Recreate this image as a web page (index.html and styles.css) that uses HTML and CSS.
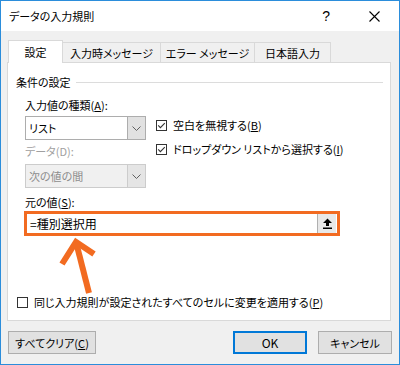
FILE: index.html
```html
<!DOCTYPE html>
<html lang="ja">
<head>
    <meta charset="UTF-8">
    <meta name="viewport" content="width=device-width, initial-scale=1.0">
    <title>データの入力規則</title>
    <link rel="stylesheet" href="styles.css">
</head>
<body>
    <div class="dialogWindow">
        <div class="titleBar">
            <span class="titleText">データの入力規則</span>
            <span class="helpBtn">?</span>
            <svg class="closeBtn" width="11" height="11" viewBox="0 0 11 11">
                <path d="M0.5 0.5 L10.5 10.5 M10.5 0.5 L0.5 10.5" stroke="#000" stroke-width="1.1" fill="none"/>
            </svg>
        </div>

        <div class="dialogBody">
            <div class="tabRow">
                <div class="tab tabActive" style="width:55px">設定</div>
                <div class="tab" style="width:98px">入力時メッセージ</div>
                <div class="tab" style="width:94px">エラー メッセージ</div>
                <div class="tab" style="width:76px">日本語入力</div>
            </div>

            <div class="tabPanel">
                <div class="groupTitle">
                    <span>条件の設定</span>
                    <span class="groupLine"></span>
                </div>

                <div class="criteriaBlock">
                    <div class="leftColumn">
                        <div class="fieldLabel">入力値の種類(<u>A</u>):</div>
                        <div class="comboBox">
                            <span class="comboValue">リスト</span>
                            <span class="comboDrop">
                                <svg width="9" height="5" viewBox="0 0 9 5"><path d="M0.5 0.5 L4.5 4.5 L8.5 0.5" stroke="#606060" fill="none"/></svg>
                            </span>
                        </div>
                        <div class="fieldLabel fieldLabelDisabled dataLabel">データ(D):</div>
                        <div class="comboBox comboDisabled">
                            <span class="comboValue">次の値の間</span>
                            <span class="comboDrop">
                                <svg width="9" height="5" viewBox="0 0 9 5"><path d="M0.5 0.5 L4.5 4.5 L8.5 0.5" stroke="#606060" fill="none"/></svg>
                            </span>
                        </div>
                    </div>
                    <div class="rightColumn">
                        <div class="checkRow">
                            <svg class="checkBox" width="11" height="11" viewBox="0 0 11 11">
                                <rect x="0.5" y="0.5" width="10" height="10" fill="#fff" stroke="#333"/>
                                <path d="M2.2 5.4 L4.4 7.6 L8.8 3.2" stroke="#333" stroke-width="1.1" fill="none"/>
                            </svg>
                            <span>空白を無視する(<u>B</u>)</span>
                        </div>
                        <div class="checkRow">
                            <svg class="checkBox" width="11" height="11" viewBox="0 0 11 11">
                                <rect x="0.5" y="0.5" width="10" height="10" fill="#fff" stroke="#333"/>
                                <path d="M2.2 5.4 L4.4 7.6 L8.8 3.2" stroke="#333" stroke-width="1.1" fill="none"/>
                            </svg>
                            <span>ドロップダウン リストから選択する(<u>I</u>)</span>
                        </div>
                    </div>
                </div>

                <div class="fieldLabel sourceLabel">元の値(<u>S</u>):</div>
                <div class="sourceBox">
                    <span class="sourceValue">=種別選択用</span>
                    <span class="collapseBtn">
                        <svg width="11" height="11" viewBox="0 0 11 11">
                            <path d="M5.5 0.5 L10 5 L7 5 L7 8 L4 8 L4 5 L1 5 Z" fill="#000"/>
                            <rect x="1" y="9.5" width="9" height="1.5" fill="#000"/>
                        </svg>
                    </span>
                </div>

                <div class="checkRow applyRow">
                    <svg class="checkBox" width="11" height="11" viewBox="0 0 11 11">
                        <rect x="0.5" y="0.5" width="10" height="10" fill="#fff" stroke="#333"/>
                    </svg>
                    <span>同じ入力規則が設定されたすべてのセルに変更を適用する(<u>P</u>)</span>
                </div>
            </div>

            <div class="buttonRow">
                <button class="dlgBtn clearBtn">すべてクリア(<u>C</u>)</button>
                <button class="dlgBtn okBtn">OK</button>
                <button class="dlgBtn cancelBtn">キャンセル</button>
            </div>
        </div>

        <!-- annotation arrow -->
        <svg class="annotArrow" width="400" height="365" viewBox="0 0 400 365">
            <polyline points="62,264 76,242 94,254" stroke="#f26b21" stroke-width="6" fill="none" stroke-linejoin="miter"/>
            <line x1="76" y1="242" x2="89" y2="293" stroke="#f26b21" stroke-width="6"/>
        </svg>
    </div>
</body>
</html>
```

FILE: styles.css
```css
html, body {
    margin: 0;
    padding: 0;
    background-color: #fff;
}

body {
    font-family: "Noto Sans CJK JP", "Noto Sans", sans-serif;
    font-size: 11px;
    font-feature-settings: "palt";
    color: #000;
}

u {
    text-underline-offset: 1px;
}

.dialogWindow {
    position: relative;
    width: 400px;
    height: 365px;
    box-sizing: border-box;
    border: 1px solid #2b8ddb;
    background-color: #f0f0f0;
    display: flex;
    flex-direction: column;
}

.titleBar {
    height: 30px;
    background-color: #fff;
    display: flex;
    align-items: center;
    padding-left: 8px;
    flex-shrink: 0;
}

.titleText {
    flex: 1;
    line-height: 16px;
}

.helpBtn {
    font-family: "Liberation Sans", sans-serif;
    font-size: 14px;
    margin-right: 39px;
}

.closeBtn {
    margin-right: 19px;
}

.dialogBody {
    padding: 9px 8px 0 6px;
    display: flex;
    flex-direction: column;
}

.tabRow {
    display: flex;
    align-items: flex-end;
    padding-left: 1px;
    height: 22px;
}

.tab {
    box-sizing: border-box;
    height: 20px;
    border: 1px solid #d9d9d9;
    border-bottom: none;
    border-left: none;
    background-color: #f0f0f0;
    display: flex;
    align-items: center;
    justify-content: center;
    line-height: 16px;
    padding-top: 1px;
}

.tabActive {
    height: 23px;
    margin-bottom: -1px;
    border-left: 1px solid #d9d9d9;
    background-color: #fff;
    position: relative;
    z-index: 1;
    padding-top: 0;
}

.tabPanel {
    box-sizing: border-box;
    height: 259px;
    border: 1px solid #d9d9d9;
    background-color: #fff;
    padding: 11px 7px 10px 8px;
    display: flex;
    flex-direction: column;
}

.groupTitle {
    display: flex;
    align-items: center;
    line-height: 16px;
    gap: 5px;
}

.groupLine {
    flex: 1;
    height: 1px;
    background-color: #dcdcdc;
    margin-top: 1px;
}

.criteriaBlock {
    display: flex;
    margin-top: 7px;
    margin-left: 9px;
}

.leftColumn {
    width: 121px;
    display: flex;
    flex-direction: column;
}

.fieldLabel {
    line-height: 16px;
}

.fieldLabelDisabled {
    color: #a0a0a0;
}

.dataLabel {
    margin-top: 3px;
}

.comboBox {
    box-sizing: border-box;
    height: 24px;
    margin-top: 3px;
    border: 1px solid #adadad;
    background-color: #fff;
    display: flex;
}

.comboDisabled {
    margin-top: 5px;
    border-color: #cccccc;
    background-color: #f0f0f0;
    color: #8d8d8d;
}

.comboValue {
    flex: 1;
    padding-left: 3px;
    line-height: 22px;
}

.comboDrop {
    width: 17px;
    border-left: 1px solid #adadad;
    background-color: #e1e1e1;
    display: flex;
    align-items: center;
    justify-content: center;
}

.comboDisabled .comboDrop {
    border-left-color: #cccccc;
    background-color: #e5e5e5;
}

.rightColumn {
    margin-left: 10px;
    padding-top: 20px;
    display: flex;
    flex-direction: column;
    gap: 8px;
}

.checkRow {
    display: flex;
    align-items: center;
    line-height: 16px;
    gap: 6px;
}

.checkBox {
    flex-shrink: 0;
}

.sourceLabel {
    margin-top: 6px;
    margin-left: 9px;
}

.sourceBox {
    box-sizing: border-box;
    width: 316px;
    height: 25px;
    margin-top: 1px;
    margin-left: 8px;
    border: 3px solid #f26b21;
    background-color: #fff;
    display: flex;
}

.sourceValue {
    flex: 1;
    padding-left: 3px;
    line-height: 19px;
    font-size: 12px;
}

.collapseBtn {
    width: 18px;
    margin-right: 1px;
    border-left: 1px solid #b0b0b0;
    background-color: #e8e8e8;
    display: flex;
    align-items: center;
    justify-content: center;
}

.applyRow {
    margin-top: auto;
    margin-left: 1px;
}

.buttonRow {
    display: flex;
    margin-top: 10px;
    padding-left: 1px;
}

.dlgBtn {
    box-sizing: border-box;
    height: 23px;
    border: 1px solid #adadad;
    background-color: #e1e1e1;
    font-family: inherit;
    font-size: 11px;
    font-feature-settings: "palt";
    color: #000;
    padding: 0;
    line-height: 16px;
}

.clearBtn {
    width: 88px;
}

.okBtn {
    width: 74px;
    margin-left: auto;
    border: 2px solid #0078d7;
    font-size: 12px;
}

.cancelBtn {
    width: 74px;
    margin-left: 11px;
    margin-right: -1px;
}

.annotArrow {
    position: absolute;
    left: -1px;
    top: -1px;
    pointer-events: none;
}
```
